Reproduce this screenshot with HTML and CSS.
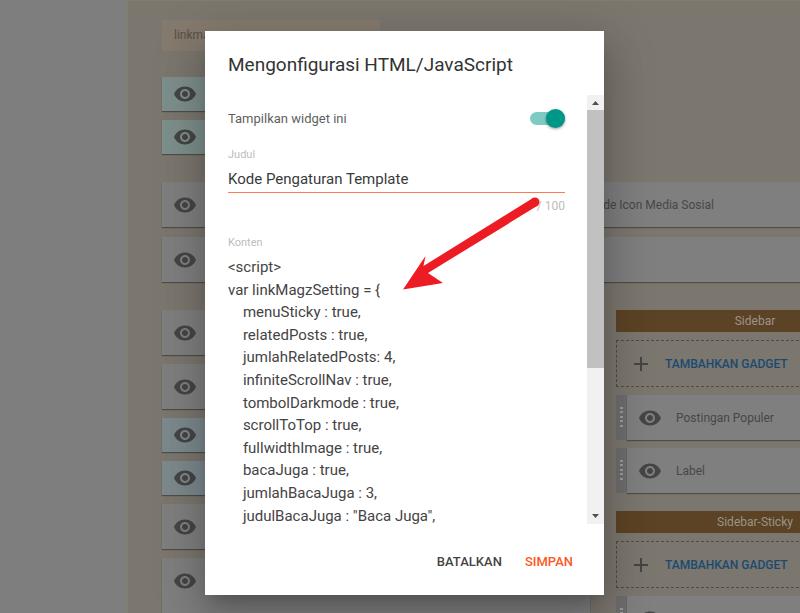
FILE: index.html
```html
<!DOCTYPE html>
<html lang="id">
<head>
    <meta charset="UTF-8">
    <title>Mengonfigurasi HTML/JavaScript</title>
    <link rel="stylesheet" href="styles.css">
</head>
<body>
<svg class="icon-defs" width="0" height="0">
    <symbol id="eye" viewBox="0 0 24 24">
        <path d="M12 4.5C7 4.5 2.73 7.61 1 12c1.73 4.39 6 7.5 11 7.5s9.27-3.11 11-7.5c-1.73-4.39-6-7.5-11-7.5zM12 17c-2.76 0-5-2.24-5-5s2.24-5 5-5 5 2.24 5 5-2.24 5-5 5zm0-8c-1.66 0-3 1.34-3 3s1.34 3 3 3 3-1.34 3-3-1.34-3-3-3z"/>
    </symbol>
    <symbol id="plus" viewBox="0 0 24 24">
        <path d="M19 13h-6v6h-2v-6H5v-2h6V5h2v6h6v2z"/>
    </symbol>
</svg>

<div class="layout">
    <aside class="side"></aside>
    <main class="main">
        <div class="chip">linkmagz</div>

        <div class="stack stack-top">
            <div class="gadget short teal"><svg class="eye"><use href="#eye"/></svg></div>
            <div class="gadget short teal"><svg class="eye"><use href="#eye"/></svg></div>
        </div>

        <div class="pair">
            <div class="gadget"><svg class="eye"><use href="#eye"/></svg></div>
            <div class="gadget"><svg class="eye"><use href="#eye"/></svg><span class="gadget-name">Kode Icon Media Sosial</span></div>
        </div>
        <div class="pair">
            <div class="gadget"><svg class="eye"><use href="#eye"/></svg></div>
            <div class="gadget"></div>
        </div>

        <div class="columns">
            <div class="stack">
                <div class="gadget"><svg class="eye"><use href="#eye"/></svg></div>
                <div class="gadget"><svg class="eye"><use href="#eye"/></svg></div>
                <div class="gadget short blue"><svg class="eye"><use href="#eye"/></svg></div>
                <div class="gadget short blue"><svg class="eye"><use href="#eye"/></svg></div>
                <div class="gadget"><svg class="eye"><use href="#eye"/></svg></div>
                <div class="gadget tall"><svg class="eye"><use href="#eye"/></svg></div>
            </div>

            <div class="section-col">
                <div class="section-title">Sidebar</div>
                <div class="add-gadget"><svg class="plus"><use href="#plus"/></svg><span>TAMBAHKAN GADGET</span></div>
                <div class="row">
                    <div class="handle"></div>
                    <div class="gadget"><svg class="eye"><use href="#eye"/></svg><span class="gadget-name">Postingan Populer</span></div>
                </div>
                <div class="row">
                    <div class="handle"></div>
                    <div class="gadget"><svg class="eye"><use href="#eye"/></svg><span class="gadget-name">Label</span></div>
                </div>

                <div class="section-title section-next">Sidebar-Sticky</div>
                <div class="add-gadget"><svg class="plus"><use href="#plus"/></svg><span>TAMBAHKAN GADGET</span></div>
                <div class="row">
                    <div class="handle"></div>
                    <div class="gadget"><svg class="eye"><use href="#eye"/></svg></div>
                </div>
            </div>
        </div>
    </main>
</div>

<div class="dialog">
    <h2 class="dialog-title">Mengonfigurasi HTML/JavaScript</h2>
    <div class="dialog-body">
        <div class="dialog-content">
            <div class="switch-row">
                <span>Tampilkan widget ini</span>
                <span class="switch"><span class="switch-knob"></span></span>
            </div>
            <div class="field-label label-title">Judul</div>
            <div class="title-input">Kode Pengaturan Template</div>
            <div class="counter">/ 100</div>
            <div class="field-label label-content">Konten</div>
            <pre class="code">&lt;script&gt;
var linkMagzSetting = {
    menuSticky : true,
    relatedPosts : true,
    jumlahRelatedPosts: 4,
    infiniteScrollNav : true,
    tombolDarkmode : true,
    scrollToTop : true,
    fullwidthImage : true,
    bacaJuga : true,
    jumlahBacaJuga : 3,
    judulBacaJuga : "Baca Juga",</pre>
        </div>
        <div class="scrollbar">
            <div class="scroll-btn scroll-up"><svg width="7" height="4" viewBox="0 0 7 4"><path d="M3.5 0L7 4H0z"/></svg></div>
            <div class="scroll-thumb"></div>
            <div class="scroll-rest"></div>
            <div class="scroll-btn"><svg width="7" height="4" viewBox="0 0 7 4"><path d="M0 0h7L3.500 4z"/></svg></div>
        </div>
    </div>
    <div class="dialog-actions">
        <span class="action">BATALKAN</span>
        <span class="action action-save">SIMPAN</span>
    </div>
</div>

<!-- panah merah -->
<svg class="arrow" width="800" height="613" viewBox="0 0 800 613">
    <path d="M532.600 198.200L537.400 205.800L428 273L443 283L403 289.500L425.500 256L423.500 266Z" fill="#ed1c24"/>
    <circle cx="535" cy="202" r="4.500" fill="#ed1c24"/>
</svg>
</body>
</html>
```

FILE: styles.css
```css
* {
    box-sizing: border-box;
}

html, body {
    margin: 0;
    height: 613px;
    overflow: hidden;
}

body {
    font-family: Roboto, "Liberation Sans", sans-serif;
    background: #7e7e7e;
    color: #333333;
}

.icon-defs {
    position: absolute;
}

/* --- halaman belakang --- */
.layout {
    display: flex;
    width: 800px;
    height: 613px;
    overflow: hidden;
}

.side {
    flex: 0 0 127px;
    background: #7e7e7e;
}

.main {
    flex: 0 0 800px;
    height: 613px;
    padding: 19px 0 0 34px;
    background: #7b766e;
    border-left: 1px solid #857c6c;
    border-top: 1px solid #857c6c;
}

.chip {
    width: 218px;
    height: 31px;
    padding-left: 12px;
    font-size: 12px;
    line-height: 31px;
    color: #5a5045;
    background: #857a6e;
}

.stack {
    display: flex;
    flex-direction: column;
    gap: 9px;
}

.stack-top {
    width: 428px;
    margin-top: 26px;
}

.pair {
    display: grid;
    grid-template-columns: 368px 354px;
    gap: 10px;
    margin-top: 10px;
}

.stack-top + .pair {
    margin-top: 28px;
}

.columns {
    display: grid;
    grid-template-columns: 428px 278px;
    gap: 26px;
    margin-top: 28px;
}

.gadget {
    display: flex;
    align-items: center;
    height: 45px;
    padding-left: 11px;
    font-size: 12px;
    color: #474747;
    background: #7f7f7f;
    box-shadow: 0 1px 1px rgba(0, 0, 0, 0.35);
}

.gadget.short {
    height: 34px;
}

.gadget.tall {
    height: 80px;
    padding-bottom: 34px;
}

.teal {
    background: #7d8f8c;
}

.blue {
    background: #7c898d;
}

.eye {
    flex: none;
    width: 24px;
    height: 24px;
    fill: #454545;
}

.gadget-name {
    margin-left: 14px;
}

.section-title {
    height: 22px;
    font-size: 12px;
    line-height: 23px;
    text-align: center;
    color: #9b9388;
    background: #5c4325;
}

.section-next {
    margin-top: 18px;
}

.add-gadget {
    display: flex;
    align-items: center;
    height: 47px;
    margin-top: 8px;
    padding-left: 12px;
    font-size: 12px;
    font-weight: 500;
    color: #1a4a72;
    border: 1px dashed #4f4b45;
}

.add-gadget span {
    margin-left: 12px;
}

.plus {
    flex: none;
    width: 24px;
    height: 24px;
    fill: #454545;
}

.row {
    display: flex;
    margin-top: 8px;
}

.handle {
    display: flex;
    align-items: center;
    justify-content: center;
    flex: 0 0 11px;
    height: 45px;
    background: #6e6e6e;
}

.handle::before {
    content: "";
    width: 3px;
    height: 22px;
    background: repeating-linear-gradient(#9c9c9c 0 2px, transparent 2px 4.400px);
}

.row .gadget {
    flex: 1;
}

/* --- dialog --- */
.dialog {
    position: absolute;
    left: 205px;
    top: 31px;
    display: flex;
    flex-direction: column;
    width: 399px;
    height: 564px;
    background: #ffffff;
    box-shadow: 0 11px 15px -7px rgba(0, 0, 0, 0.2), 0 24px 38px 3px rgba(0, 0, 0, 0.14), 0 9px 46px 8px rgba(0, 0, 0, 0.12);
}

.dialog-title {
    margin: 0;
    height: 64px;
    padding: 21px 23px 0;
    font-size: 19px;
    font-weight: 400;
    line-height: 26px;
    color: #333333;
}

.dialog-body {
    display: flex;
    height: 429px;
}

.dialog-content {
    flex: 1;
    min-width: 0;
    padding-left: 23px;
    padding-right: 22px;
}

.switch-row {
    display: flex;
    justify-content: space-between;
    align-items: center;
    height: 19px;
    margin-top: 14px;
    font-size: 13px;
    color: #5f5f5f;
}

.switch {
    position: relative;
    width: 35px;
    height: 13px;
    border-radius: 7px;
    background: #7fcbc3;
}

.switch-knob {
    position: absolute;
    right: 0;
    top: -3px;
    width: 19px;
    height: 19px;
    border-radius: 50%;
    background: #009688;
    box-shadow: 0 1px 3px rgba(0, 0, 0, 0.4);
}

.field-label {
    font-size: 11px;
    line-height: 14px;
    color: #bdbdbd;
}

.label-title {
    margin-top: 20px;
}

.title-input {
    height: 31px;
    padding-top: 7px;
    font-size: 15px;
    line-height: 20px;
    color: #3a3a3a;
    border-bottom: 1px solid #ff7a50;
}

.counter {
    margin-top: 6px;
    font-size: 12px;
    line-height: 14px;
    text-align: right;
    color: #bdbdbd;
}

.label-content {
    margin-top: 23px;
}

.code {
    margin: 6px 0 0;
    font-family: Roboto, "Liberation Sans", sans-serif;
    font-size: 15px;
    line-height: 22.6px;
    color: #444444;
}

.scrollbar {
    display: flex;
    flex-direction: column;
    flex: 0 0 17px;
    background: #f1f1f1;
}

.scroll-btn {
    display: flex;
    align-items: center;
    justify-content: center;
    height: 17px;
    fill: #505050;
}

.scroll-up {
    height: 15px;
}

.scroll-thumb {
    height: 258px;
    background: #c1c1c1;
}

.scroll-rest {
    flex: 1;
}

.dialog-actions {
    display: flex;
    justify-content: flex-end;
    gap: 23px;
    padding: 28px 31px 0 0;
}

.action {
    font-size: 13px;
    font-weight: 500;
    line-height: 20px;
    color: #444444;
}

.action-save {
    color: #ff5722;
}

.arrow {
    position: absolute;
    left: 0;
    top: 0;
    pointer-events: none;
}
```
